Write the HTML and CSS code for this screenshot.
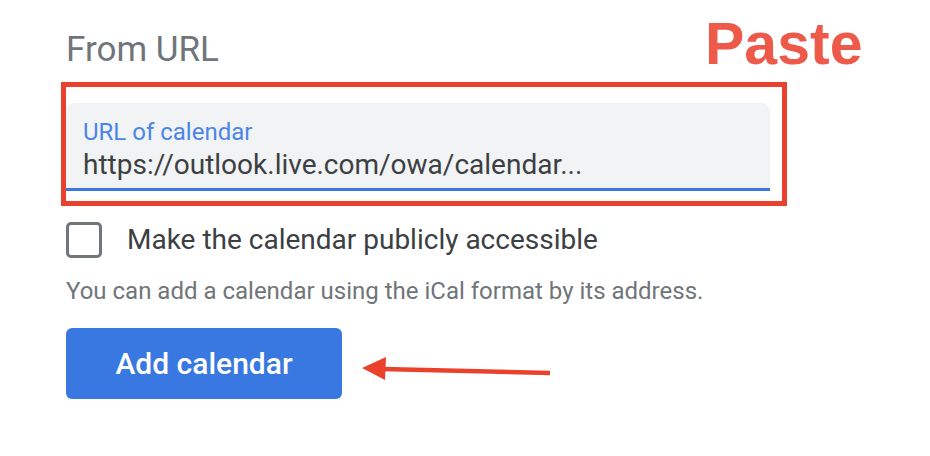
FILE: index.html
```html
<!DOCTYPE html>
<html lang="en">
<head>
    <meta charset="UTF-8">
    <title>From URL</title>
    <link rel="stylesheet" href="styles.css">
</head>
<body>

<div class="page">
    <h2 class="title">From URL</h2>

    <div class="highlight">
        <div class="field">
            <label class="field-label" for="calUrl">URL of calendar</label>
            <div class="field-value" id="calUrl">https://outlook.live.com/owa/calendar...</div>
        </div>
    </div>

    <div class="check-row">
        <span class="checkbox"></span>
        <span class="check-text">Make the calendar publicly accessible</span>
    </div>

    <p class="hint">You can add a calendar using the iCal format by its address.</p>

    <button class="add-btn">Add calendar</button>

    <!-- annotations -->
    <div class="note-paste">Paste</div>
    <svg class="note-arrow" width="200" height="30" viewBox="0 0 200 30">
        <line x1="20" y1="13" x2="188" y2="17" stroke="#e9412c" stroke-width="4.5"/>
        <polygon points="0,12 24,1 23,24" fill="#e9412c"/>
    </svg>
</div>

</body>
</html>
```

FILE: styles.css
```css
body {
    margin: 0;
    background-color: #fff;
    font-family: Roboto, "Liberation Sans", Arial, sans-serif;
}
.page {
    position: relative;
    width: 930px;
    height: 456px;
    padding-left: 66px;
    box-sizing: border-box;
    display: flex;
    flex-direction: column;
    align-items: flex-start;
}
.title {
    margin: 28px 0 0 0;
    font-size: 35px;
    line-height: 44px;
    font-weight: 400;
    color: #70757a;
}
.highlight {
    margin: 10px 0 0 -5px;
    width: 726px;
    box-sizing: border-box;
    border: 5px solid #e9412c;
    padding: 16px 12px 10px 0;
}
.field {
    background-color: #f1f3f4;
    border-radius: 8px 8px 0 0;
    border-bottom: 3px solid #3a78e0;
    padding: 15px 17px 7px;
    display: flex;
    flex-direction: column;
    gap: 3px;
}
.field-label {
    font-size: 24px;
    line-height: 28px;
    color: #4a86e8;
}
.field-value {
    font-size: 28px;
    line-height: 32px;
    color: #3c4043;
}
.check-row {
    margin-top: 16px;
    display: flex;
    align-items: center;
    gap: 25px;
}
.checkbox {
    width: 36px;
    height: 36px;
    box-sizing: border-box;
    border: 3px solid #70757a;
    border-radius: 5px;
}
.check-text {
    font-size: 28px;
    line-height: 36px;
    color: #3c4043;
}
.hint {
    margin: 19px 0 0 0;
    font-size: 24px;
    line-height: 28px;
    color: #70757a;
}
.add-btn {
    margin-top: 23px;
    width: 276px;
    height: 71px;
    border: none;
    border-radius: 6px;
    background-color: #3878e0;
    color: #fff;
    font-family: Roboto, "Liberation Sans", Arial, sans-serif;
    font-size: 30px;
    font-weight: 500;
    padding: 0;
}
.note-paste {
    position: absolute;
    left: 705px;
    top: 15px;
    font-family: "Liberation Sans", Arial, sans-serif;
    font-size: 59px;
    line-height: 1;
    font-weight: 700;
    color: #ee5a4a;
}
.note-arrow {
    position: absolute;
    left: 362px;
    top: 356px;
}
```
